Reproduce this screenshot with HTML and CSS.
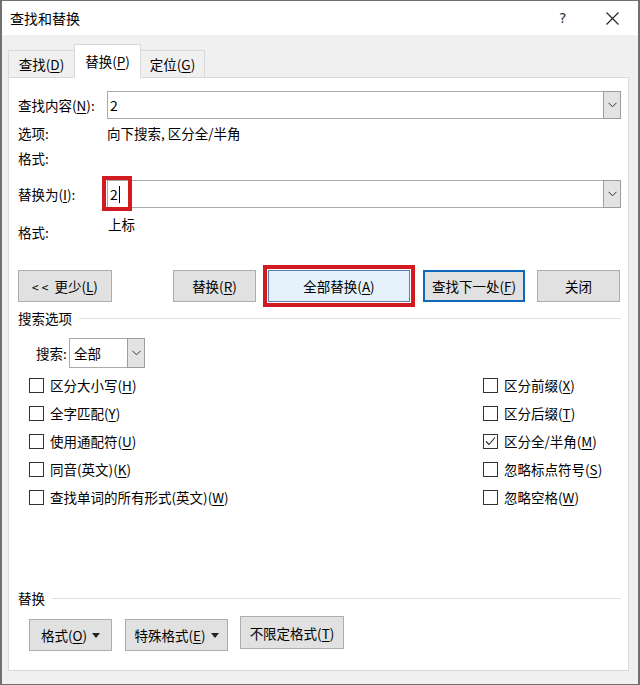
FILE: index.html
```html
<!DOCTYPE html>
<html>
<head>
    <meta charset="utf-8">
    <title>查找和替换</title>
    <link rel="stylesheet" href="styles.css">
</head>
<body>
    <div class="dialog">
        <div class="titlebar">
            <span class="title">查找和替换</span>
            <span class="help">?</span>
            <span class="close">
                <svg width="13" height="13" viewBox="0 0 13 13"><path d="M0.5 0.5 L12.5 12.5 M12.5 0.5 L0.5 12.5" stroke="#222" stroke-width="1.1" fill="none"/></svg>
            </span>
        </div>

        <div class="tabs">
            <div class="tab tab-find">查找(<u>D</u>)</div>
            <div class="tab tab-replace active">替换(<u>P</u>)</div>
            <div class="tab tab-goto">定位(<u>G</u>)</div>
        </div>

        <div class="panel">
            <div class="field-row">
                <span class="label">查找内容(<u>N</u>):</span>
                <div class="combo">
                    <span class="value">2</span>
                    <span class="drop"><svg width="9" height="6" viewBox="0 0 9 6"><polyline points="0.5,0.8 4.5,4.8 8.5,0.8" stroke="#333" fill="none"/></svg></span>
                </div>
            </div>
            <div class="info-row first">
                <span class="label">选项:</span>
                <span>向下搜索, 区分全/半角</span>
            </div>
            <div class="info-row">
                <span class="label">格式:</span>
            </div>

            <div class="field-row replace-row">
                <span class="label">替换为(<u>I</u>):</span>
                <div class="combo">
                    <span class="value">2<span class="caret"></span></span>
                    <span class="drop"><svg width="9" height="6" viewBox="0 0 9 6"><polyline points="0.5,0.8 4.5,4.8 8.5,0.8" stroke="#333" fill="none"/></svg></span>
                    <span class="mark-box"></span>
                </div>
            </div>
            <div class="format-row">
                <span class="label">格式:</span>
                <span class="format-value">上标</span>
            </div>

            <div class="actions">
                <button class="btn btn-less"><span class="arrows">&lt;&lt;</span>更少(<u>L</u>)</button>
                <button class="btn btn-replace">替换(<u>R</u>)</button>
                <span class="mark-wrap">
                    <button class="btn btn-default">全部替换(<u>A</u>)</button>
                </span>
                <button class="btn btn-next">查找下一处(<u>F</u>)</button>
                <button class="btn btn-close">关闭</button>
            </div>

            <div class="group-title">搜索选项</div>

            <div class="search-row">
                <span class="search-label">搜索:</span>
                <div class="select">
                    <span class="value">全部</span>
                    <span class="drop"><svg width="9" height="6" viewBox="0 0 9 6"><polyline points="0.5,0.8 4.5,4.8 8.5,0.8" stroke="#333" fill="none"/></svg></span>
                </div>
            </div>

            <div class="options">
                <label class="option"><span class="box"></span>区分大小写(<u>H</u>)</label>
                <label class="option"><span class="box"></span>区分前缀(<u>X</u>)</label>
                <label class="option"><span class="box"></span>全字匹配(<u>Y</u>)</label>
                <label class="option"><span class="box"></span>区分后缀(<u>T</u>)</label>
                <label class="option"><span class="box"></span>使用通配符(<u>U</u>)</label>
                <label class="option"><span class="box"><svg width="11" height="11" viewBox="0 0 11 11"><polyline points="1,5.5 4,8.5 10,1.5" stroke="#222" stroke-width="1.1" fill="none"/></svg></span>区分全/半角(<u>M</u>)</label>
                <label class="option"><span class="box"></span>同音(英文)(<u>K</u>)</label>
                <label class="option"><span class="box"></span>忽略标点符号(<u>S</u>)</label>
                <label class="option"><span class="box"></span>查找单词的所有形式(英文)(<u>W</u>)</label>
                <label class="option"><span class="box"></span>忽略空格(<u>W</u>)</label>
            </div>

            <div class="group-title replace-title">替换</div>

            <div class="format-buttons">
                <button class="btn btn-format">格式(<u>O</u>) <span class="tri"></span></button>
                <button class="btn btn-special">特殊格式(<u>E</u>) <span class="tri"></span></button>
                <button class="btn btn-clear">不限定格式(<u>T</u>)</button>
            </div>
        </div>

        <div class="footer"></div>
    </div>
</body>
</html>
```

FILE: styles.css
```css
body {
    margin: 0;
    padding: 0;
    background: #ffffff;
}

.dialog {
    width: 640px;
    height: 685px;
    box-sizing: border-box;
    border: 1px solid #707070;
    border-left-width: 2px;
    border-right-width: 2px;
    background-color: #f0f0f0;
    display: flex;
    flex-direction: column;
    font-family: "Noto Sans CJK SC", "Liberation Sans", sans-serif;
    font-size: 13.5px;
    color: #000;
}

u {
    text-decoration-thickness: 1px;
    text-underline-offset: 2px;
}

/* title bar */
.titlebar {
    height: 34px;
    flex: none;
    background-color: #fff;
    display: flex;
    align-items: center;
    padding-left: 8px;
}

.title {
    font-size: 14px;
    flex: 1;
}

.help {
    font-family: "DejaVu Sans", sans-serif;
    font-size: 14px;
    color: #333;
    width: 47px;
}

.close {
    width: 32px;
    display: flex;
    align-items: center;
    padding-top: 1px;
}

/* tabs */
.tabs {
    height: 42px;
    flex: none;
    display: flex;
    align-items: flex-end;
    padding-left: 6px;
}

.tab {
    box-sizing: border-box;
    height: 27px;
    border: 1px solid #d9d9d9;
    border-bottom: none;
    background-color: #f0f0f0;
    display: flex;
    align-items: center;
    justify-content: center;
}

.tab-find {
    width: 66px;
    border-right: none;
}

.tab-replace {
    width: 67px;
}

.tab-goto {
    width: 64px;
    border-left: none;
}

.tab.active {
    height: 34px;
    margin-bottom: -1px;
    background-color: #fff;
    position: relative;
    z-index: 1;
    padding-bottom: 2px;
}

/* panel */
.panel {
    flex: 1;
    margin: 0 9px 0 6px;
    border: 1px solid #d9d9d9;
    background-color: #fff;
    padding: 13px 7px 0 9px;
    display: flex;
    flex-direction: column;
}

.footer {
    height: 13px;
    flex: none;
}

.label {
    width: 89px;
    flex: none;
}

.field-row {
    display: flex;
    align-items: center;
    height: 28px;
}

.combo {
    flex: 1;
    height: 28px;
    box-sizing: border-box;
    border: 1px solid #a9a9a9;
    display: flex;
    align-items: center;
    position: relative;
}

.combo .value {
    flex: 1;
    padding-left: 2px;
    font-size: 14px;
    display: flex;
    align-items: center;
}

.drop {
    width: 18px;
    height: 28px;
    margin: -1px -1px -1px 0;
    box-sizing: border-box;
    border: 1px solid #9c9c9c;
    background-color: #e3e3e3;
    display: flex;
    align-items: center;
    justify-content: center;
}

.info-row {
    display: flex;
    height: 20px;
    line-height: 20px;
    margin-top: 5px;
}

.info-row.first {
    margin-top: 4px;
}

.replace-row {
    margin-top: 12px;
}

.caret {
    display: inline-block;
    width: 1px;
    height: 17px;
    background-color: #000;
    margin-left: 1px;
}

.mark-box {
    position: absolute;
    left: -6px;
    top: -5px;
    width: 30px;
    height: 35px;
    box-sizing: border-box;
    border: 4px solid #d21a22;
}

.format-row {
    display: flex;
    height: 28px;
    margin-top: 6px;
    line-height: 20px;
}

.format-row .label {
    padding-top: 8px;
}

.format-value {
    padding-left: 1px;
}

/* buttons */
.actions {
    display: flex;
    align-items: center;
    height: 42px;
    margin-top: 23px;
}

.btn {
    height: 32px;
    box-sizing: border-box;
    border: 1px solid #adadad;
    background-color: #e1e1e1;
    font-family: "Noto Sans CJK SC", "Liberation Sans", sans-serif;
    font-size: 13.5px;
    color: #000;
    padding: 0;
    display: flex;
    align-items: center;
    justify-content: center;
}

.btn-less {
    width: 94px;
}

.arrows {
    letter-spacing: 3px;
    margin-right: 3px;
    font-size: 12px;
}

.btn-replace {
    width: 83px;
    margin-left: 61px;
}

.mark-wrap {
    margin-left: 7px;
    border: 4px solid #d21a22;
    padding: 1px;
    display: flex;
}

.btn-default {
    width: 142px;
    background-color: #e5f1fb;
    border-color: #5d7fa6;
}

.btn-next {
    width: 102px;
    margin-left: 8px;
    border: 2px solid #0e68bd;
}

.btn-close {
    width: 83px;
    margin-left: 12px;
}

.group-title {
    display: flex;
    align-items: center;
    height: 20px;
    margin-top: 1px;
}

.group-title::after {
    content: "";
    flex: 1;
    height: 1px;
    background-color: #e0e0e0;
    margin-left: 7px;
}

.search-row {
    display: flex;
    align-items: center;
    margin-top: 10px;
    padding-left: 18px;
}

.search-label {
    width: 33px;
}

.select {
    width: 76px;
    height: 30px;
    box-sizing: border-box;
    border: 1px solid #a9a9a9;
    display: flex;
    align-items: center;
}

.select .value {
    flex: 1;
    padding-left: 4px;
}

.select .drop {
    height: 30px;
}

/* check options */
.options {
    display: grid;
    grid-template-columns: 454px auto;
    grid-auto-rows: 28px;
    margin-top: 3px;
    padding-left: 11px;
}

.option {
    display: flex;
    align-items: center;
}

.box {
    width: 13px;
    height: 13px;
    border: 1px solid #333;
    margin-right: 6px;
    display: flex;
    align-items: center;
    justify-content: center;
}

.replace-title {
    margin-top: 77px;
}

.format-buttons {
    display: flex;
    margin-top: 11px;
    padding-left: 11px;
}

.btn-format {
    width: 83px;
}

.btn-special {
    width: 103px;
    margin-left: 13px;
}

.btn-clear {
    width: 104px;
    margin-left: 12px;
    height: 33px;
    margin-top: -3px;
}

.tri {
    display: inline-block;
    margin-left: 5px;
    border-left: 4px solid transparent;
    border-right: 4px solid transparent;
    border-top: 5px solid #222;
}
```
